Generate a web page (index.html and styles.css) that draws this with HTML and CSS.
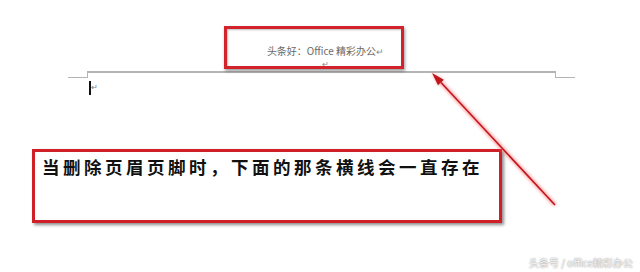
FILE: index.html
```html
<!DOCTYPE html>
<html lang="zh">
<head>
<meta charset="utf-8">
<title>页眉横线</title>
<link rel="stylesheet" href="styles.css">
</head>
<body>
<div class="page">
  <div class="header-area">
    <div class="header-text">头条好：Office 精彩办公<span class="pmark">↵</span></div>
    <div class="header-mark">↵</div>
  </div>
  <div class="rule">
    <div class="corner-l"></div>
    <div class="rule-mid"></div>
    <div class="corner-r"></div>
  </div>
  <div class="body-line"><span class="caret"></span><span class="caret-mark">↵</span></div>
  <div class="note">当删除页眉页脚时，下面的那条横线会一直存在</div>

  <div class="hl-header"></div>
  <svg class="arrow" width="640" height="272" viewBox="0 0 640 272">
    <defs>
      <filter id="glow" x="-20%" y="-20%" width="140%" height="140%">
        <feGaussianBlur stdDeviation="1.4"/>
      </filter>
    </defs>
    <g filter="url(#glow)" opacity="0.55">
      <line x1="555" y1="205" x2="441" y2="82.5" stroke="#ff5a5a" stroke-width="4"/>
      <polygon points="432,73 443.8,79.8 438,85.2" fill="#ff5a5a"/>
    </g>
    <line x1="555" y1="205" x2="441" y2="82.5" stroke="#c0161d" stroke-width="1.6"/>
    <polygon points="432,73 443.8,79.8 438,85.2" fill="#c0161d"/>
  </svg>
  <div class="watermark">头条号 / office精彩办公</div>
</div>
</body>
</html>
```
FILE: styles.css
```css
html, body {
  margin: 0;
  padding: 0;
  background: #ffffff;
}
.page {
  position: relative;
  width: 640px;
  height: 272px;
  overflow: hidden;
  font-family: "Noto Sans CJK SC", "Liberation Sans", sans-serif;
}
.header-area {
  height: 71px;
  margin-left: 88px;
  width: 469px;
  display: flex;
  flex-direction: column;
  align-items: center;
  padding-top: 44px;
  padding-left: 6px;
  box-sizing: border-box;
}
.header-text {
  font-size: 10px;
  line-height: 13px;
  color: #6a6a6a;
  white-space: nowrap;
}
.pmark {
  color: #888;
  font-size: 9px;
}
.header-mark {
  font-size: 8px;
  line-height: 9px;
  color: #888;
  margin-top: 1px;
}
.rule {
  display: flex;
  margin-left: 68px;
  width: 507px;
  height: 7px;
}
.corner-l {
  width: 19px;
  border-right: 1.5px solid #b4b4b4;
  border-bottom: 1.5px solid #b4b4b4;
}
.rule-mid {
  flex: 1;
  border-top: 2px solid #b4b4b4;
}
.corner-r {
  width: 19px;
  border-left: 1.5px solid #b4b4b4;
  border-bottom: 1.5px solid #b4b4b4;
}
.body-line {
  display: flex;
  align-items: flex-start;
  margin-left: 89px;
  margin-top: 3px;
  height: 14px;
}
.caret {
  width: 2px;
  height: 14px;
  background: #111;
}
.caret-mark {
  font-size: 8px;
  line-height: 8px;
  color: #777;
  margin-top: 2px;
}
.note {
  margin-left: 32px;
  margin-top: 54px;
  width: 470px;
  height: 74px;
  box-sizing: border-box;
  border: 3px solid #cf1f27;
  box-shadow: 2px 2px 3px rgba(0, 0, 0, 0.45);
  padding: 5px 0 0 7px;
  font-size: 17.5px;
  line-height: 20px;
  letter-spacing: 3.5px;
  font-weight: 600;
  color: #111;
  white-space: nowrap;
}
.hl-header {
  position: absolute;
  left: 224px;
  top: 26px;
  width: 180px;
  height: 43px;
  box-sizing: border-box;
  border: 3px solid #d3232a;
  box-shadow: 1px 2px 3px rgba(0, 0, 0, 0.4), inset 1px 1px 2px rgba(0, 0, 0, 0.25);
}
.arrow {
  position: absolute;
  left: 0;
  top: 0;
}
.watermark {
  position: absolute;
  right: 7px;
  bottom: 3px;
  font-size: 10px;
  line-height: 12px;
  color: #f6f6f6;
  text-shadow: 0 0 1.5px rgba(0, 0, 0, 0.6);
  white-space: nowrap;
}
```
